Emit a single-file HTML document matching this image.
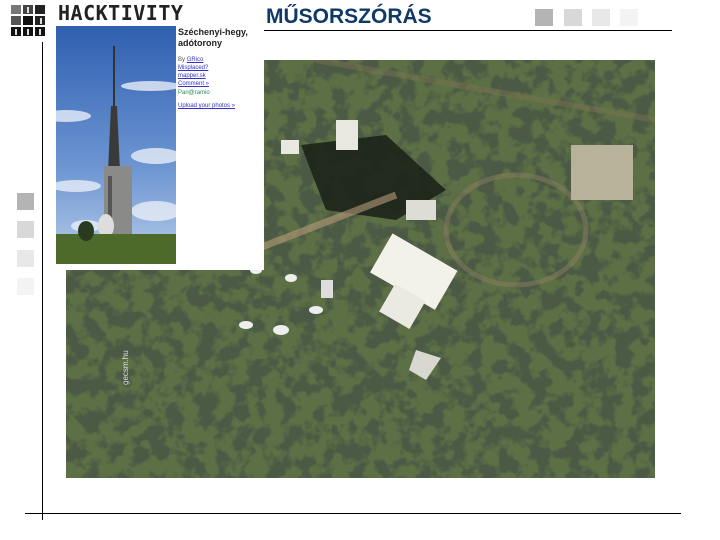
<!DOCTYPE html>
<html><head><meta charset="utf-8"><style>
body{margin:0;width:720px;height:540px;background:#fff;position:relative;overflow:hidden;font-family:"Liberation Sans",sans-serif}
.a{position:absolute}
</style></head><body>
<svg class="a" style="left:11px;top:5px" width="36" height="32">
<rect x="0" y="0" width="10" height="9" fill="#777"/><rect x="12" y="0" width="10" height="9" fill="#444"/><rect x="24" y="0" width="10" height="9" fill="#222"/>
<rect x="0" y="11" width="10" height="9" fill="#555"/><rect x="12" y="11" width="10" height="9" fill="#111"/><rect x="24" y="11" width="10" height="9" fill="#222"/>
<rect x="0" y="22" width="10" height="9" fill="#111"/><rect x="12" y="22" width="10" height="9" fill="#111"/><rect x="24" y="22" width="10" height="9" fill="#111"/>
<rect x="16" y="2" width="2" height="6" fill="#ddd"/><rect x="29" y="13" width="2" height="6" fill="#ddd"/><rect x="4" y="24" width="2" height="6" fill="#ddd"/><rect x="16" y="24" width="2" height="6" fill="#ddd"/><rect x="28" y="24" width="2" height="6" fill="#ddd"/>
</svg>
<div class="a" style="left:58px;top:1px;font:bold 20px 'DejaVu Sans Mono',monospace;letter-spacing:0.5px;color:#222">HACKTIVITY</div>
<div class="a" style="left:266px;top:5px;font:bold 21px 'Liberation Sans';color:#0f3a66">MŰSORSZÓRÁS</div>
<div class="a" style="left:264px;top:30px;width:408px;height:1px;background:#000"></div>
<div class="a" style="left:535px;top:9px;width:18px;height:17px;background:#b4b4b4"></div>
<div class="a" style="left:564px;top:9px;width:18px;height:17px;background:#d8d8d8"></div>
<div class="a" style="left:592px;top:9px;width:18px;height:17px;background:#e8e8e8"></div>
<div class="a" style="left:620px;top:9px;width:18px;height:17px;background:#f3f3f3"></div>
<div class="a" style="left:17px;top:193px;width:17px;height:17px;background:#b4b4b4"></div>
<div class="a" style="left:17px;top:221px;width:17px;height:17px;background:#d8d8d8"></div>
<div class="a" style="left:17px;top:250px;width:17px;height:17px;background:#e8e8e8"></div>
<div class="a" style="left:17px;top:278px;width:17px;height:17px;background:#f3f3f3"></div>
<div class="a" style="left:42px;top:42px;width:1px;height:478px;background:#000"></div>
<div class="a" style="left:25px;top:513px;width:656px;height:1px;background:#000"></div>
<svg class="a" style="left:66px;top:60px" width="589" height="418">
<defs><filter id="n" x="0" y="0" width="100%" height="100%"><feTurbulence type="fractalNoise" baseFrequency="0.06" numOctaves="3" seed="5"/><feColorMatrix values="0 0 0 0 0.07  0 0 0 0 0.1  0 0 0 0 0.06  6 0 0 0 -2.6"/></filter></defs>
<rect width="589" height="418" fill="#5d7045"/>
<rect width="589" height="418" filter="url(#n)"/>
<path d="M250 0 L589 60" stroke="#7a7250" stroke-width="6" fill="none" opacity=".5"/>
<ellipse cx="450" cy="170" rx="70" ry="55" fill="none" stroke="#8a8060" stroke-width="5" opacity=".5"/>
<rect x="505" y="85" width="62" height="55" fill="#b8b29a"/>
<path d="M235 85 L320 75 L380 130 L330 160 L260 150Z" fill="#1c2418" opacity=".9"/>
<path d="M175 195 L330 135" stroke="#b89b7a" stroke-width="7" opacity=".6"/>
<rect x="270" y="60" width="22" height="30" fill="#e8e8e0"/>
<rect x="215" y="80" width="18" height="14" fill="#e8e8e0"/>
<g transform="rotate(30 340 210)"><rect x="310" y="185" width="75" height="45" fill="#f2f2ea"/></g>
<g transform="rotate(30 340 245)"><rect x="320" y="232" width="35" height="32" fill="#eaeae2"/></g>
<rect x="340" y="140" width="30" height="20" fill="#ddddd5"/>
<path d="M350 290 L375 298 L360 320 L343 310Z" fill="#d8d8d0"/>
<rect x="255" y="220" width="12" height="18" fill="#ddd"/>
<g fill="#eee"><ellipse cx="190" cy="210" rx="6" ry="4"/><ellipse cx="225" cy="218" rx="6" ry="4"/><ellipse cx="250" cy="250" rx="7" ry="4"/><ellipse cx="215" cy="270" rx="8" ry="5"/><ellipse cx="180" cy="265" rx="7" ry="4"/></g>
</svg>
<div class="a" style="left:121px;top:385px;font-size:8px;color:#ddd;transform:rotate(-90deg);transform-origin:left top">gecsm.hu</div>
<div class="a" style="left:56px;top:26px;width:208px;height:244px;background:#fff"></div>
<svg class="a" style="left:56px;top:26px" width="120" height="238">
<defs><linearGradient id="s" x1="0" y1="0" x2="0" y2="1"><stop offset="0" stop-color="#2f5fb0"/><stop offset=".6" stop-color="#6d96d2"/><stop offset="1" stop-color="#b8cde8"/></linearGradient></defs>
<rect width="120" height="238" fill="url(#s)"/>
<g fill="#e8eef8" opacity=".8"><ellipse cx="10" cy="90" rx="25" ry="6"/><ellipse cx="95" cy="60" rx="30" ry="5"/><ellipse cx="100" cy="130" rx="25" ry="8"/><ellipse cx="20" cy="160" rx="25" ry="6"/><ellipse cx="100" cy="185" rx="25" ry="10"/><ellipse cx="30" cy="200" rx="15" ry="6"/></g>
<rect x="57" y="20" width="2" height="60" fill="#333"/>
<path d="M55 80 L61 80 L64 145 L52 145Z" fill="#3a3a3a"/>
<rect x="48" y="140" width="28" height="75" fill="#8a8a88"/>
<rect x="52" y="150" width="4" height="60" fill="#555"/>
<ellipse cx="50" cy="200" rx="8" ry="12" fill="#ddd"/>
<rect x="0" y="208" width="120" height="30" fill="#4d6a2a"/>
<ellipse cx="30" cy="205" rx="8" ry="10" fill="#2a3a20"/>
</svg>
<div class="a" style="left:178px;top:27px;font:bold 9px 'Liberation Sans';line-height:11px;color:#222">Széchenyi-hegy,<br>adótorony</div>
<div class="a" style="left:178px;top:56px;font:6px 'Liberation Sans';line-height:8px;color:#33c"><span style="color:#555">By</span> <u>GRico</u><br><u>Misplaced?</u><br><u>mapper.sk</u><br><u>Comment »</u></div>
<div class="a" style="left:178px;top:90px;font:6px 'Liberation Sans';color:#2a8a4a">Pan@ramio</div>
<div class="a" style="left:178px;top:103px;font:6px 'Liberation Sans';color:#33c"><u>Upload your photos »</u></div>
</body></html>
